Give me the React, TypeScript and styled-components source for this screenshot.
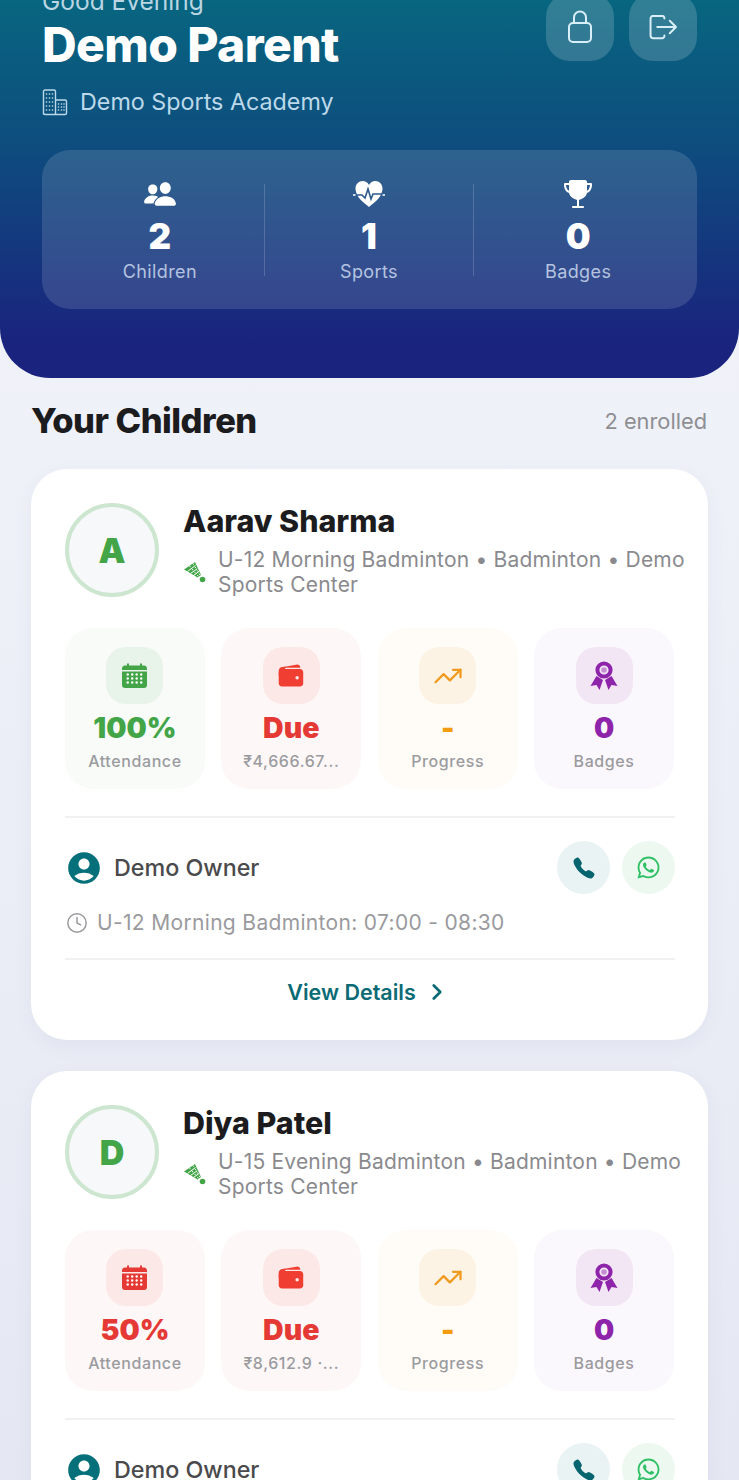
import React from "react";
import styled, { createGlobalStyle } from "styled-components";
import { FaWhatsapp } from "react-icons/fa";
import { IoCall, IoPeople, IoTrophy, IoWallet } from "react-icons/io5";
import { LuChevronRight, LuClock, LuTrendingUp } from "react-icons/lu";
import { MdAccountCircle } from "react-icons/md";

const GlobalStyle = createGlobalStyle`
  html, body {
    margin: 0;
    padding: 0;
    height: 1480px;
    overflow: hidden;
    background: #eef0f7;
  }
  * {
    box-sizing: border-box;
  }
`;

const Page = styled.div`
  width: 739px;
  height: 1480px;
  overflow: hidden;
  font-family: Inter, "Noto Sans", sans-serif;
  background: linear-gradient(180deg, #f3f5fa 0%, #e5e8f3 100%);
`;

const Hero = styled.header`
  margin-top: -30px;
  height: 408px;
  padding: 23px 42px 0;
  border-radius: 0 0 50px 50px;
  background: linear-gradient(180deg, #066b80 0%, #0d4f7e 40%, #1a237e 92%);
`;

const HeroTop = styled.div`
  display: flex;
  justify-content: space-between;
  align-items: flex-start;
`;

const Greeting = styled.div`
  font-size: 24.5px;
  line-height: 16px;
  color: #b9d6e2;
`;

const ParentName = styled.h1`
  margin: 8px 0 0;
  font-size: 48px;
  line-height: 56px;
  font-weight: 800;
  letter-spacing: -0.6px;
  color: #fff;
`;

const Academy = styled.div`
  display: flex;
  align-items: center;
  gap: 12px;
  margin-top: 14px;
  font-size: 23.3px;
  line-height: 30px;
  color: #bcd9ea;
`;

const HeroActions = styled.div`
  display: flex;
  gap: 15px;
`;

const RoundSquare = styled.button`
  width: 68px;
  height: 68px;
  display: flex;
  align-items: center;
  justify-content: center;
  border: 0;
  padding: 0;
  border-radius: 24px;
  background: rgba(255, 255, 255, 0.17);
  color: #d8eef8;
`;

const StatsPanel = styled.div`
  display: flex;
  align-items: center;
  height: 159px;
  margin-top: 33px;
  padding: 0 15px 0 14px;
  border-radius: 28px;
  background: rgba(255, 255, 255, 0.13);
`;

const HeroStat = styled.div`
  flex: 1;
  display: flex;
  flex-direction: column;
  align-items: center;
`;

const HeroIcon = styled.div`
  height: 34px;
  display: flex;
  align-items: center;
  color: #fff;
`;

const HeroValue = styled.div`
  margin-top: 4px;
  font-size: 35px;
  line-height: 42px;
  font-weight: 900;
  color: #fff;
`;

const HeroLabel = styled.div`
  margin-top: 4px;
  font-size: 18px;
  line-height: 22px;
  letter-spacing: 0.4px;
  color: #b5c4e0;
`;

const HeroRule = styled.div`
  width: 1.5px;
  height: 92px;
  background: rgba(255, 255, 255, 0.17);
`;

const SectionHead = styled.div`
  display: flex;
  justify-content: space-between;
  align-items: center;
  height: 91px;
  padding: 0 32px 6px 31px;
`;

const SectionTitle = styled.h2`
  margin: 0;
  font-size: 34.5px;
  font-weight: 800;
  letter-spacing: -0.5px;
  color: #1c1c1e;
`;

const SectionNote = styled.span`
  font-size: 21.8px;
  color: #8e8e93;
`;

const Cards = styled.div`
  display: flex;
  flex-direction: column;
  gap: 31px;
  padding: 0 31px;
`;

const Card = styled.article`
  padding: 34px 34px 0;
  height: 571px;
  flex-shrink: 0;
  border-radius: 36px;
  background: #fff;
  box-shadow: 0 6px 20px rgba(60, 70, 120, 0.05);
`;

const ChildHead = styled.div`
  display: flex;
  gap: 24px;
  align-items: flex-start;
`;

const Avatar = styled.div<{ $color: string }>`
  width: 94px;
  height: 94px;
  flex-shrink: 0;
  display: flex;
  align-items: center;
  justify-content: center;
  border-radius: 50%;
  border: 4px solid #cde6d0;
  background: #f6f8fa;
  font-size: 34px;
  font-weight: 900;
  color: ${p => p.$color};
`;

const ChildName = styled.div`
  font-size: 30.4px;
  line-height: 37px;
  font-weight: 800;
  color: #1c1c1e;
`;

const ProgramRow = styled.div`
  display: flex;
  align-items: center;
  gap: 11px;
  margin-top: 7px;
  color: #43a548;
`;

const ProgramText = styled.div`
  font-size: 21px;
  line-height: 25px;
  letter-spacing: 0.2px;
  color: #8a8a8e;
  white-space: nowrap;
`;

const TileRow = styled.div`
  display: grid;
  grid-template-columns: repeat(4, 1fr);
  gap: 16.5px;
  margin-top: 31px;
`;

const Tile = styled.div<{ $bg: string }>`
  height: 161px;
  display: flex;
  flex-direction: column;
  align-items: center;
  padding-top: 19px;
  border-radius: 28px;
  background: ${p => p.$bg};
`;

const TileIcon = styled.div<{ $bg: string; $color: string }>`
  width: 57px;
  height: 57px;
  display: flex;
  align-items: center;
  justify-content: center;
  border-radius: 20px;
  background: ${p => p.$bg};
  color: ${p => p.$color};
`;

const TileValue = styled.div<{ $color: string }>`
  margin-top: 7px;
  font-size: 28.5px;
  line-height: 34px;
  font-weight: 900;
  color: ${p => p.$color};
`;

const TileLabel = styled.div`
  margin-top: 6px;
  font-size: 16px;
  line-height: 20px;
  font-weight: 500;
  letter-spacing: 0.6px;
  color: #9b9b9f;
  white-space: nowrap;
`;

const Rule = styled.div`
  height: 2px;
  margin-right: -1px;
  background: #f0f1f3;
`;

const TopRule = styled(Rule)`
  margin-top: 27px;
`;

const OwnerRow = styled.div`
  display: flex;
  align-items: center;
  margin: 23px -1px 0 0;
  height: 53px;
`;

const OwnerName = styled.div`
  flex: 1;
  margin-left: 11px;
  font-size: 23.3px;
  font-weight: 500;
  color: #4a4a4c;
`;

const OwnerIcon = styled.div`
  display: flex;
  color: #05707a;
`;

const CircleButton = styled.button<{ $bg: string; $color: string }>`
  width: 53px;
  height: 53px;
  margin-left: 12px;
  display: flex;
  align-items: center;
  justify-content: center;
  padding: 0;
  border: 0;
  border-radius: 50%;
  background: ${p => p.$bg};
  color: ${p => p.$color};
`;

const Schedule = styled.div`
  display: flex;
  align-items: center;
  gap: 9px;
  margin-top: 15px;
  padding-left: 1px;
  font-size: 21px;
  line-height: 28px;
  letter-spacing: 0.33px;
  color: #9a9a9e;
`;

const BottomRule = styled(Rule)`
  margin-top: 21px;
`;

const DetailsLink = styled.div`
  display: flex;
  align-items: center;
  justify-content: center;
  gap: 8px;
  height: 64px;
  padding-right: 2px;
  font-size: 21.5px;
  font-weight: 600;
  color: #0b6b75;
`;

const BuildingIcon = () => (
  <svg width="26" height="27" viewBox="0 0 26 27" fill="none" stroke="currentColor" strokeWidth="1.4">
    <path d="M1.5 25.5V2.5A1.5 1.5 0 0 1 3 1H12A1.5 1.5 0 0 1 13.5 2.5V25.5" />
    <path d="M13.5 11H23A1.5 1.5 0 0 1 24.5 12.5V24A1.5 1.5 0 0 1 23 25.5H3A1.5 1.5 0 0 1 1.5 24" />
    <g stroke="none" fill="currentColor">
      {[5, 9, 13, 17, 21].map(y =>
        [4.5, 7.5, 10.5].map(x => <rect key={`${x}-${y}`} x={x - 0.7} y={y - 0.7} width="1.4" height="1.4" />)
      )}
      {[15, 18, 21].map(y =>
        [16.5, 19.5, 22].map(x => <rect key={`${x}-${y}`} x={x - 0.7} y={y - 0.7} width="1.4" height="1.4" />)
      )}
    </g>
  </svg>
);

const HeartPulse = () => (
  <svg width="32" height="28" viewBox="0 0 32 28">
    <path
      fill="#fff"
      d="M16 27 C10 22 3 17 2.5 9 C2.3 4 6 1 9.5 1 C12.3 1 14.7 2.5 16 5 C17.3 2.5 19.7 1 22.5 1 C26 1 29.7 4 29.5 9 C29 17 22 22 16 27Z"
    />
    <path fill="none" stroke="#2c5a8e" strokeWidth="1.6" d="M2 15 H9 L12 18 L15 9 L18 19 L20 14 H30" />
    <path fill="none" stroke="#fff" strokeWidth="1.6" strokeLinecap="round" d="M0.5 15 H2 M30 15 H31.5" />
  </svg>
);

const LockIcon = () => (
  <svg width="26" height="34" viewBox="0 0 26 34" fill="none" stroke="currentColor" strokeWidth="2">
    <rect x="2" y="13" width="22" height="19" rx="4" />
    <path d="M7 13V7.5a6 6 0 0 1 12 0V13" />
  </svg>
);

const ExitIcon = () => (
  <svg width="29" height="25" viewBox="0 0 32 28" fill="none" stroke="currentColor" strokeWidth="2.2" strokeLinecap="round" strokeLinejoin="round">
    <path d="M17 4V3.5A2.5 2.5 0 0 0 14.5 1H4.5A3 3 0 0 0 1.5 4V23A3 3 0 0 0 4.5 26H14.5A2.5 2.5 0 0 0 17 23.5V23" />
    <path d="M9 13.5H30M23 6.5L30 13.5L23 20.5" />
  </svg>
);

const ShuttleIcon = () => (
  <svg width="24" height="24" viewBox="0 0 24 24" fill="currentColor">
    <path d="M1 9.5L12 2L18 15L14.5 17.500Z" />
    <g stroke="#fff" strokeWidth="1" fill="none">
      <path d="M4.500 11.500L12.500 5.500M7.500 13.500L14.200 8.800M10.500 15.500L16 11.500" />
      <path d="M6.500 6L15.500 16.500M10 3.500L17 15" strokeDasharray="1.500 2.500" />
    </g>
    <circle cx="19.500" cy="19.500" r="2.800" />
  </svg>
);

const CalendarIcon = () => (
  <svg width="27" height="27" viewBox="0 0 27 27">
    <path
      fill="currentColor"
      d="M1 8V6.5C1 4.5 2.5 3.5 4 3.5H6V1.5H8V3.5H19V1.5H21V3.5H23C24.5 3.5 26 4.5 26 6.5V8Z"
    />
    <path fill="currentColor" d="M1 9.500H26V23C26 24.800 24.800 26 23 26H4C2.200 26 1 24.800 1 23Z" />
    {[12.5, 16.5, 20.5].map(y =>
      [6, 10.5, 15, 19.5].map(x => <circle key={`${x}-${y}`} cx={x + 0.7} cy={y} r="1.2" fill="#fff" />)
    )}
  </svg>
);

const RibbonIcon = () => (
  <svg width="28" height="30" viewBox="0 0 28 30">
    <circle cx="14" cy="9" r="6.6" fill="none" stroke="currentColor" strokeWidth="4" />
    <circle cx="14" cy="9" r="2.8" fill="currentColor" opacity="0.45" />
    <path fill="currentColor" d="M6.500 15L13 19L9.500 29L6.500 24L0.500 25Z" />
    <path fill="currentColor" d="M21.500 15L15 19L18.500 29L21.500 24L27.500 25Z" />
  </svg>
);

type Child = {
  name: string;
  initial: string;
  program: string;
  attendance: string;
  attendanceColor: string;
  attendanceBg: string;
  attendanceIconBg: string;
  due: string;
  schedule: string;
};

const children: Child[] = [
  {
    name: "Aarav Sharma",
    initial: "A",
    program: "U-12 Morning Badminton • Badminton • Demo",
    attendance: "100%",
    attendanceColor: "#43a548",
    attendanceBg: "#f8fbf8",
    attendanceIconBg: "#e8f3e9",
    due: "₹4,666.67...",
    schedule: "U-12 Morning Badminton: 07:00 - 08:30",
  },
  {
    name: "Diya Patel",
    initial: "D",
    program: "U-15 Evening Badminton • Badminton • Demo",
    attendance: "50%",
    attendanceColor: "#e53935",
    attendanceBg: "#fdf8f7",
    attendanceIconBg: "#fce8e6",
    due: "₹8,612.9 ·...",
    schedule: "U-15 Evening Badminton: 17:00 - 18:30",
  },
];

const ChildCard = ({ child }: { child: Child }) => (
  <Card>
    <ChildHead>
      <Avatar $color="#43a548">{child.initial}</Avatar>
      <div>
        <ChildName>{child.name}</ChildName>
        <ProgramRow>
          <ShuttleIcon />
          <ProgramText>
            {child.program}
            <br />
            Sports Center
          </ProgramText>
        </ProgramRow>
      </div>
    </ChildHead>

    <TileRow>
      <Tile $bg={child.attendanceBg}>
        <TileIcon $bg={child.attendanceIconBg} $color={child.attendanceColor}>
          <CalendarIcon />
        </TileIcon>
        <TileValue $color={child.attendanceColor}>{child.attendance}</TileValue>
        <TileLabel>Attendance</TileLabel>
      </Tile>
      <Tile $bg="#fdf8f7">
        <TileIcon $bg="#fce8e6" $color="#f03e33">
          <IoWallet size={28} />
        </TileIcon>
        <TileValue $color="#e53935">Due</TileValue>
        <TileLabel>{child.due}</TileLabel>
      </Tile>
      <Tile $bg="#fffcf8">
        <TileIcon $bg="#fdf3e4" $color="#f09a1e">
          <LuTrendingUp size={30} strokeWidth={1.8} />
        </TileIcon>
        <TileValue $color="#f39c12">-</TileValue>
        <TileLabel>Progress</TileLabel>
      </Tile>
      <Tile $bg="#fbf8fd">
        <TileIcon $bg="#f2e6f5" $color="#8e24aa">
          <RibbonIcon />
        </TileIcon>
        <TileValue $color="#8e24aa">0</TileValue>
        <TileLabel>Badges</TileLabel>
      </Tile>
    </TileRow>

    <TopRule />

    <OwnerRow>
      <OwnerIcon>
        <MdAccountCircle size={38} />
      </OwnerIcon>
      <OwnerName>Demo Owner</OwnerName>
      <CircleButton $bg="#eaf3f4" $color="#05646e">
        <IoCall size={24} />
      </CircleButton>
      <CircleButton $bg="#edf9f0" $color="#2fc066">
        <FaWhatsapp size={25} />
      </CircleButton>
    </OwnerRow>

    <Schedule>
      <LuClock size={22} strokeWidth={1.6} />
      {child.schedule}
    </Schedule>

    <BottomRule />

    <DetailsLink>
      View Details
      <LuChevronRight size={26} strokeWidth={2.5} />
    </DetailsLink>
  </Card>
);

export default function App() {
  return (
    <Page>
      <GlobalStyle />
      <Hero>
        <HeroTop>
          <div>
            <Greeting>Good Evening</Greeting>
            <ParentName>Demo Parent</ParentName>
            <Academy>
              <BuildingIcon />
              Demo Sports Academy
            </Academy>
          </div>
          <HeroActions>
            <RoundSquare>
              <LockIcon />
            </RoundSquare>
            <RoundSquare>
              <ExitIcon />
            </RoundSquare>
          </HeroActions>
        </HeroTop>
        <StatsPanel>
          <HeroStat>
            <HeroIcon>
              <IoPeople size={34} />
            </HeroIcon>
            <HeroValue>2</HeroValue>
            <HeroLabel>Children</HeroLabel>
          </HeroStat>
          <HeroRule />
          <HeroStat>
            <HeroIcon>
              <HeartPulse />
            </HeroIcon>
            <HeroValue>1</HeroValue>
            <HeroLabel>Sports</HeroLabel>
          </HeroStat>
          <HeroRule />
          <HeroStat>
            <HeroIcon>
              <IoTrophy size={32} />
            </HeroIcon>
            <HeroValue>0</HeroValue>
            <HeroLabel>Badges</HeroLabel>
          </HeroStat>
        </StatsPanel>
      </Hero>

      <SectionHead>
        <SectionTitle>Your Children</SectionTitle>
        <SectionNote>2 enrolled</SectionNote>
      </SectionHead>

      <Cards>
        {children.map(child => (
          <ChildCard key={child.name} child={child} />
        ))}
      </Cards>
    </Page>
  );
}
